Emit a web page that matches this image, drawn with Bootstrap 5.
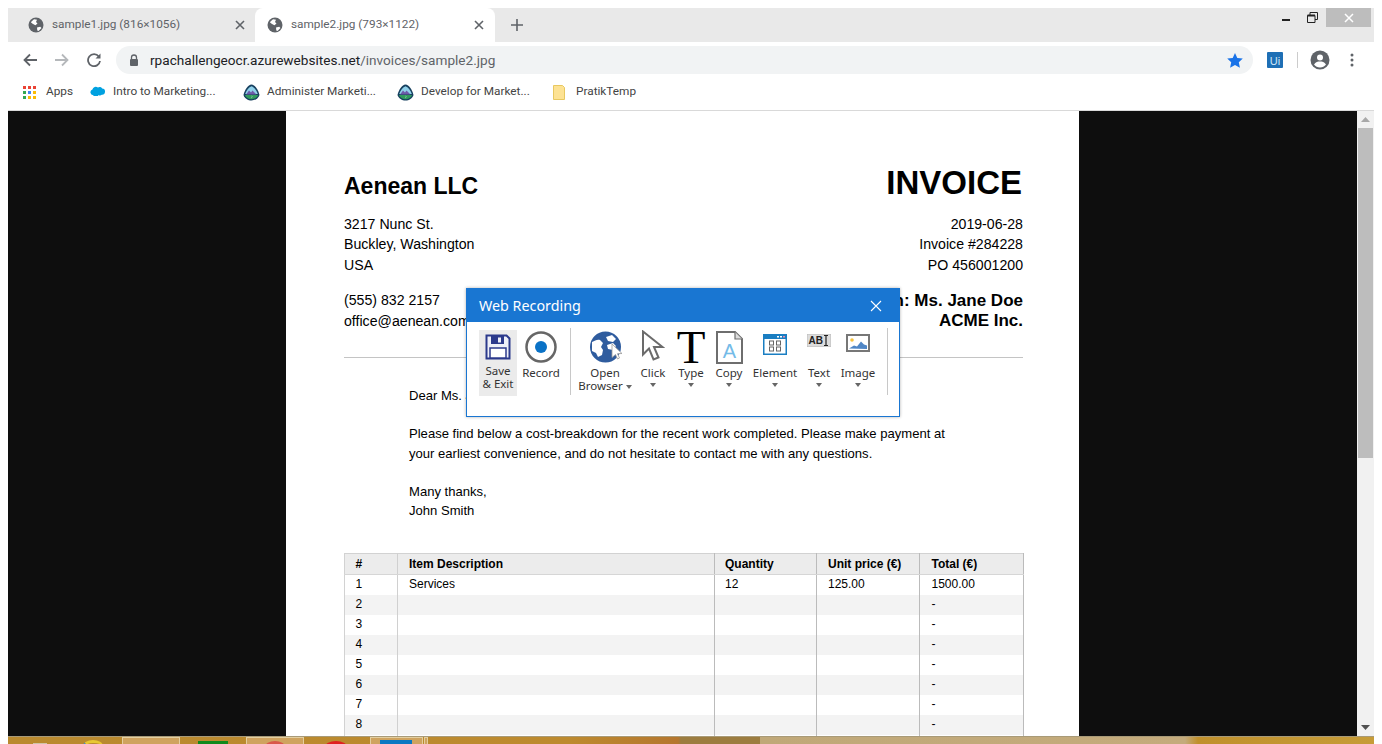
<!DOCTYPE html>
<html lang="en">
<head>
    <meta charset="UTF-8">
    <title>sample2.jpg (793×1122)</title>
    <link rel="stylesheet" href="https://cdn.jsdelivr.net/npm/bootstrap@5.3.0/dist/css/bootstrap.min.css">
    <style>
        html, body { height: 100%; overflow: hidden; background: #fff; }
        .browser-win { height: 736px; margin: 8px 8px 0; position: relative; font-family: Roboto, sans-serif; }
        .tabstrip { height: 34px; background: #e9e9e9; }
        .tab-item { height: 34px; font-size: 11.8px; color: #5f6368; }
        .first-tab { width: 247px; padding: 0 10px 0 20px; }
        .active-tab { width: 240px; padding: 0 11px 0 12px; background: #fff; border-radius: 8px 8px 0 0; }
        .tab-label { margin-left: 8px; flex: 1; white-space: nowrap; }
        .tab-plus { height: 34px; margin-left: 16px; }
        .winctl { margin-left: auto; margin-right: 3px; height: 19px; align-self: flex-start; }
        .win-min { width: 36px; height: 19px; }
        .win-max { width: 16px; height: 19px; margin-right: 6px; }
        .win-close { width: 45px; height: 19px; background: #bdbdbd; }
        .toolbar-row { height: 36px; background: #fff; }
        .nav-back { margin-left: 15px; }
        .nav-forward { margin-left: 18px; }
        .nav-reload { margin-left: 18px; }
        .addr-pill { width: 1137px; height: 28px; margin-left: 15px; padding: 0 10px 0 13px; background: #f1f3f4; border-radius: 14px; font-size: 13.6px; color: #5f6368; }
        .addr-pill b { font-weight: 400; color: #202124; }
        .addr-text { margin-left: 11px; }
        .ui-ext { margin-left: 14px; }
        .bar-sep { width: 1px; height: 16px; background: #ccc; margin-left: 14px; }
        .profile-ico { margin-left: 12px; }
        .more-ico { margin-left: 20px; }
        .bookmarks { height: 33px; padding: 0 0 4px 15px; border-bottom: 1px solid #d9d9d9; font-size: 11.8px; color: #444; }
        .bm-item { white-space: nowrap; }
        .bm-apps { width: 66px; }
        .bm-intro { width: 154px; }
        .bm-admin { width: 154px; }
        .bm-dev { width: 156px; }
        .bm-gap-6 { margin-left: 7px; }
        .bm-gap-8 { margin-left: 7px; }
        .bm-gap-11 { margin-left: 10px; }
        .bm-gap-12 { margin-left: 11px; }
        .cloud-ico { margin-top: -4px; }
        .view-area { height: 625px; background: #0e0e0e; overflow: hidden; }
        .sheet { width: 793px; margin-left: 278px; height: 625px; padding: 0 56px 0 58px; background: #fff; color: #000; font-family: "Liberation Sans", Arial, sans-serif; font-size: 14.15px; overflow: hidden; }
        .co-name { font-size: 23px; font-weight: 700; margin-top: 60px; line-height: 30px; }
        .inv-title { font-size: 33px; font-weight: 700; margin: 53px 1px 0 0; line-height: 38px; }
        .addr-block { line-height: 20.4px; margin-top: 13px; }
        .addr-right { margin-top: 12px; }
        .contact-block { line-height: 20.4px; margin-top: 15px; }
        .attn-block { font-size: 17px; font-weight: 700; line-height: 20px; margin-top: 16px; }
        .split-line { border-top: 1px solid #c4c4c4; margin: 26px 0 0; }
        .letter { margin: 28px 0 0 65px; font-size: 13.07px; line-height: 19.5px; }
        .letter p { margin: 0 0 18.5px; }
        table.inv-table { width: 679px; margin: 32.5px 0 0; font-size: 12px; table-layout: fixed; border: 1px solid #d2d2d2; border-collapse: collapse; }
        .inv-table th, .inv-table td { height: 20px; padding: 0 0 0 10px; line-height: 19px; border: 0; border-right: 1px solid #bbb; color: #000; background: #fff; box-shadow: none; }
        .inv-table th { height: 21px; background: #ececec; font-weight: 700; border-bottom: 1px solid #d6d6d6; }
        .inv-table th:first-child, .inv-table td:first-child { padding-left: 10.5px; border-right-color: #d0d0d0; }
        .inv-table th:nth-child(2), .inv-table td:nth-child(2) { padding-left: 11px; }
        .inv-table th:nth-child(4), .inv-table td:nth-child(4) { padding-left: 11px; }
        .inv-table th:nth-child(5), .inv-table td:nth-child(5) { padding-left: 11.5px; }
        .inv-table tbody tr:nth-child(even) td { background: #f3f3f3; }
        .vscroll { width: 17px; height: 625px; background: #f1f1f1; }
        .vs-thumb { height: 330px; width: 15px; margin: 0 auto; background: #bdbdbd; }
        .vs-btn { height: 17px; }
        .taskbar-strip { position: absolute; left: 8px; right: 8px; top: 736px; height: 8px; overflow: hidden; border-top: 1px solid #a89a78; background: linear-gradient(90deg, #b98a2f 0, #bd8a2e 560px, #b5762e 670px, #9c7c3f 673px, #9c7c3f 752px, #c0a878 752px, #c4ab7c 1177px, #c0902c 1190px, #c69c38 1366px); }
        .tb-btn { position: absolute; top: 0; height: 8px; width: 58px; background: #cfa35f; border: 1px solid #e4cfa0; }
        .tb-btn-short { width: 53px; }
        .tb-sliver { position: absolute; left: 416px; top: 0; width: 4px; height: 8px; background: #cfa35f; border: 1px solid #e4cfa0; }
        .tb-shape { position: absolute; }
        .tb-tan { left: 25px; top: 6px; width: 14px; height: 3px; background: #cfc4a8; }
        .tb-arc { left: 75px; top: 3px; width: 20px; height: 12px; border-top: 3px solid #e8c832; border-left: 2px solid #3f8fd0; border-radius: 50%; }
        .tb-green { left: 190px; top: 4px; width: 30px; height: 4px; background: #0f8a1c; }
        .tb-red1 { left: 257px; top: 4px; width: 20px; height: 12px; background: #d9574a; border-radius: 50%; }
        .tb-red2 { left: 317px; top: 4px; width: 22px; height: 12px; background: #e02020; border-radius: 50%; }
        .tb-blue { left: 372px; top: 3px; width: 32px; height: 5px; background: #0a78c2; }
        .rec-dialog { position: absolute; left: 458px; top: 280px; width: 434px; height: 129px; background: #fff; border: 1px solid #1976d2; box-shadow: 0 0 3px rgba(0,0,0,.3); font-family: "Noto Sans", sans-serif; }
        .rec-head { height: 33px; padding: 0 17px 0 12px; background: #1976d2; color: #fff; font-size: 14.3px; }
        .rec-tools { padding: 8px 0 0 12px; }
        .tool-item { flex: none; font-size: 11.5px; line-height: 13px; color: #333; text-align: center; }
        .tool-ico { height: 36px; }
        .tool-caret { display: block; width: 0; height: 0; margin: 4px auto 0; border: 3.5px solid transparent; border-top: 4px solid #666; border-bottom: 0; }
        .inline-caret { display: inline-block; width: 0; height: 0; vertical-align: middle; margin-left: 3px; border: 3.5px solid transparent; border-top: 4px solid #666; border-bottom: 0; }
        .tool-save { width: 38px; height: 66px; background: #ebebeb; }
        .save-ico { height: 32px; padding-top: 4px; }
        .save-label { margin-top: 2px; }
        .w-record { width: 48px; }
        .w-browser { width: 50px; }
        .w-click, .w-copy, .w-element { width: 46px; }
        .w-type { width: 30px; }
        .w-text { width: 42px; }
        .w-image { width: 36px; }
        .browser-label { margin: 0 -4px; white-space: nowrap; }
        .tool-sep { flex: none; width: 1px; height: 67px; margin-top: -2px; background: #c8c8c8; }
        .sep-first { margin: -2px 9px 0 5px; }
        .sep-last { margin-left: 11px; }
        .big-t { display: block; font-family: "Liberation Serif", serif; font-size: 47px; line-height: 34px; color: #000; }
        .ico-top1 { margin-top: 1px; }
        .ico-top4 { margin-top: 4px; }
    </style>
</head>
<body>
<div class="browser-win">
    <div class="tabstrip d-flex align-items-start">
        <div class="tab-item first-tab d-flex align-items-center">
            <svg width="16" height="16" viewBox="0 0 16 16"><circle cx="8" cy="8" r="7.500" fill="#5f6368"/><path d="M3.500 4.500 6 2.300l3 .4-1 2.300 1.500 1.500-2 1.700-2.500-1.200L3 5.500zM9 10.500l3.200-.8 1.300 1.300-3 3-1.200-.6z" fill="#fff"/></svg>
            <span class="tab-label">sample1.jpg (816×1056)</span>
            <svg width="10" height="10" viewBox="0 0 10 10"><path d="M1 1l8 8M9 1l-8 8" stroke="#5f6368" stroke-width="1.600"/></svg>
        </div>
        <div class="tab-item active-tab d-flex align-items-center">
            <svg width="16" height="16" viewBox="0 0 16 16"><circle cx="8" cy="8" r="7.500" fill="#5f6368"/><path d="M3.500 4.500 6 2.300l3 .4-1 2.300 1.500 1.500-2 1.700-2.500-1.200L3 5.500zM9 10.500l3.200-.8 1.300 1.300-3 3-1.200-.6z" fill="#fff"/></svg>
            <span class="tab-label">sample2.jpg (793×1122)</span>
            <svg width="10" height="10" viewBox="0 0 10 10"><path d="M1 1l8 8M9 1l-8 8" stroke="#5f6368" stroke-width="1.600"/></svg>
        </div>
        <div class="tab-plus d-flex align-items-center">
            <svg width="12" height="12" viewBox="0 0 12 12"><path d="M6 0v12M0 6h12" stroke="#5f6368" stroke-width="1.600"/></svg>
        </div>
        <div class="winctl d-flex">
            <div class="win-min d-flex align-items-center justify-content-center"><svg width="10" height="10" viewBox="0 0 10 10"><rect x="1" y="6" width="8" height="2" fill="#222"/></svg></div>
            <div class="win-max d-flex align-items-center justify-content-center"><svg width="11" height="11" viewBox="0 0 11 11"><path d="M.5 3.500h7.500v7H.5zM3 3.500V.5h7.500v7H8" fill="none" stroke="#222"/><path d="M.5 3.500h7.500" stroke="#222" stroke-width="2"/></svg></div>
            <div class="win-close d-flex align-items-center justify-content-center"><svg width="10" height="10" viewBox="0 0 10 10"><path d="M1 1l8 8M9 1l-8 8" stroke="#fff" stroke-width="1.500"/></svg></div>
        </div>
    </div>

    <div class="toolbar-row d-flex align-items-center">
        <svg class="nav-back" width="14" height="14" viewBox="0 0 14 14"><path d="M14 7H2M7 1.500 1.500 7 7 12.500" fill="none" stroke="#5f6368" stroke-width="1.800"/></svg>
        <svg class="nav-forward" width="14" height="14" viewBox="0 0 14 14"><path d="M0 7h12M7 1.500 12.500 7 7 12.500" fill="none" stroke="#b5b8bb" stroke-width="1.800"/></svg>
        <svg class="nav-reload" width="14" height="14" viewBox="0 0 14 14"><path d="M11.800 3.500A6 6 0 1 0 13 8" fill="none" stroke="#5f6368" stroke-width="1.800"/><path d="M13.500 0.500v5h-5z" fill="#5f6368"/></svg>
        <div class="addr-pill d-flex align-items-center">
            <svg width="10" height="12" viewBox="0 0 10 12"><path d="M2.500 5V3.500a2.500 2.500 0 0 1 5 0V5" fill="none" stroke="#5f6368" stroke-width="1.300"/><rect x="1" y="5" width="8" height="7" rx="1" fill="#5f6368"/></svg>
            <span class="addr-text flex-grow-1"><b>rpachallengeocr.azurewebsites.net</b>/invoices/sample2.jpg</span>
            <svg width="16" height="15" viewBox="0 0 16 15"><path d="M8 0l2.300 5 5.500.6-4 3.700 1.100 5.500L8 12l-4.900 2.800 1.100-5.500-4-3.700L5.700 5z" fill="#1a73e8"/></svg>
        </div>
        <svg class="ui-ext" width="16" height="16" viewBox="0 0 16 16"><rect width="16" height="16" rx="1" fill="#1e6fb5"/><text x="8" y="12.500" text-anchor="middle" font-family="Liberation Sans, sans-serif" font-size="11" fill="#cfe6f7">Ui</text></svg>
        <div class="bar-sep"></div>
        <svg class="profile-ico" width="20" height="20" viewBox="0 0 20 20"><circle cx="10" cy="10" r="9.500" fill="#5f6368"/><circle cx="10" cy="7.500" r="3" fill="#fff"/><path d="M4 14.500c1.500-2.500 3.800-3 6-3s4.500.5 6 3c-1.500 2-3.600 3-6 3s-4.500-1-6-3z" fill="#fff"/></svg>
        <svg class="more-ico" width="4" height="14" viewBox="0 0 4 14"><circle cx="2" cy="2" r="1.500" fill="#5f6368"/><circle cx="2" cy="7" r="1.500" fill="#5f6368"/><circle cx="2" cy="12" r="1.500" fill="#5f6368"/></svg>
    </div>

    <div class="bookmarks d-flex align-items-center">
        <div class="bm-item bm-apps d-flex align-items-center">
            <svg width="13" height="13" viewBox="0 0 13 13">
                <rect width="3" height="3" fill="#ea4335"/><rect x="5" width="3" height="3" fill="#ea4335"/><rect x="10" width="3" height="3" fill="#ea4335"/>
                <rect y="5" width="3" height="3" fill="#34a853"/><rect x="5" y="5" width="3" height="3" fill="#4285f4"/><rect x="10" y="5" width="3" height="3" fill="#fbbc05"/>
                <rect y="10" width="3" height="3" fill="#34a853"/><rect x="5" y="10" width="3" height="3" fill="#fbbc05"/><rect x="10" y="10" width="3" height="3" fill="#fbbc05"/>
            </svg>
            <span class="bm-gap-11">Apps</span>
        </div>
        <div class="bm-item bm-intro d-flex align-items-center">
            <svg class="cloud-ico" width="17" height="11" viewBox="0 0 18 13"><path d="M4 12a3.500 3.500 0 0 1-1-6.800A4 4 0 0 1 9.500 3a3.300 3.300 0 0 1 5 1.200A3.600 3.600 0 0 1 14 11.500a3 3 0 0 1-3.800.3 3.300 3.300 0 0 1-6.200.2z" fill="#00a1e0"/></svg>
            <span class="bm-gap-6">Intro to Marketing...</span>
        </div>
        <div class="bm-item bm-admin d-flex align-items-center">
            <svg width="17" height="17" viewBox="0 0 17 17"><path d="M8.500 0.500C12 1 15 5 16.500 11c-1 3.500-4.500 5.500-8 5.500S1.500 14.500.5 11C2 5 5 1 8.500 0.500z" fill="#17405f"/><path d="M8.500 2.200C11 3 13.500 6 14.800 10H2.200C3.500 6 6 3 8.500 2.200z" fill="#8fd0ea"/><path d="M3 10.500l3-4 2 2 1.500-2 4 4z" fill="#6d5aa8"/><path d="M1.800 11h13.400c-1 2.500-3.800 4.200-6.700 4.200S2.800 13.500 1.800 11z" fill="#2f9a5c"/><path d="M8 11l1 1.500-1 2 1.500-1.800z" fill="#fff"/></svg>
            <span class="bm-gap-8">Administer Marketi...</span>
        </div>
        <div class="bm-item bm-dev d-flex align-items-center">
            <svg width="17" height="17" viewBox="0 0 17 17"><path d="M8.500 0.500C12 1 15 5 16.500 11c-1 3.500-4.500 5.500-8 5.500S1.500 14.500.5 11C2 5 5 1 8.500 0.500z" fill="#17405f"/><path d="M8.500 2.200C11 3 13.500 6 14.800 10H2.200C3.500 6 6 3 8.500 2.200z" fill="#8fd0ea"/><path d="M3 10.500l3-4 2 2 1.500-2 4 4z" fill="#6d5aa8"/><path d="M1.800 11h13.400c-1 2.500-3.800 4.200-6.700 4.200S2.800 13.500 1.800 11z" fill="#2f9a5c"/><path d="M8 11l1 1.500-1 2 1.500-1.800z" fill="#fff"/></svg>
            <span class="bm-gap-8">Develop for Market...</span>
        </div>
        <div class="bm-item d-flex align-items-center">
            <svg width="12" height="15" viewBox="0 0 12 15"><path d="M.5.500h9l2 2v12H.5z" fill="#fde293" stroke="#e8c860"/></svg>
            <span class="bm-gap-12">PratikTemp</span>
        </div>
    </div>

    <div class="d-flex">
        <div class="view-area flex-grow-1">
            <div class="sheet">
                <div class="d-flex justify-content-between">
                    <div>
                        <div class="co-name">Aenean LLC</div>
                        <div class="addr-block">3217 Nunc St.<br>Buckley, Washington<br>USA</div>
                        <div class="contact-block">(555) 832 2157<br>office@aenean.com</div>
                    </div>
                    <div class="text-end">
                        <div class="inv-title">INVOICE</div>
                        <div class="addr-block addr-right">2019-06-28<br>Invoice #284228<br>PO 456001200</div>
                        <div class="attn-block">Attn: Ms. Jane Doe<br>ACME Inc.</div>
                    </div>
                </div>
                <div class="split-line"></div>
                <div class="letter">
                    <p>Dear Ms. Jane Doe,</p>
                    <p>Please find below a cost-breakdown for the recent work completed. Please make payment at<br>your earliest convenience, and do not hesitate to contact me with any questions.</p>
                    <p>Many thanks,<br>John Smith</p>
                </div>
                <table class="table inv-table">
                    <colgroup><col style="width:53px"><col style="width:317px"><col style="width:102px"><col style="width:103px"><col style="width:104px"></colgroup>
                    <thead>
                        <tr><th>#</th><th>Item Description</th><th>Quantity</th><th>Unit price (€)</th><th>Total (€)</th></tr>
                    </thead>
                    <tbody>
                        <tr><td>1</td><td>Services</td><td>12</td><td>125.00</td><td>1500.00</td></tr>
                        <tr><td>2</td><td></td><td></td><td></td><td>-</td></tr>
                        <tr><td>3</td><td></td><td></td><td></td><td>-</td></tr>
                        <tr><td>4</td><td></td><td></td><td></td><td>-</td></tr>
                        <tr><td>5</td><td></td><td></td><td></td><td>-</td></tr>
                        <tr><td>6</td><td></td><td></td><td></td><td>-</td></tr>
                        <tr><td>7</td><td></td><td></td><td></td><td>-</td></tr>
                        <tr><td>8</td><td></td><td></td><td></td><td>-</td></tr>
                        <tr><td>&nbsp;</td><td></td><td></td><td></td><td></td></tr>
                    </tbody>
                </table>
            </div>
        </div>
        <div class="vscroll d-flex flex-column">
            <div class="vs-btn d-flex align-items-center justify-content-center"><svg width="9" height="5" viewBox="0 0 9 5"><path d="M4.500 0l4.500 5H0z" fill="#a8a8a8"/></svg></div>
            <div class="vs-thumb"></div>
            <div class="vs-btn d-flex align-items-center justify-content-center mt-auto"><svg width="9" height="5" viewBox="0 0 9 5"><path d="M0 0h9L4.500 5z" fill="#505050"/></svg></div>
        </div>
    </div>

    <div class="rec-dialog">
        <div class="rec-head d-flex align-items-center justify-content-between">
            <span>Web Recording</span>
            <svg width="12" height="12" viewBox="0 0 12 12"><path d="M1 1l10 10M11 1L1 11" stroke="#fff" stroke-width="1.100"/></svg>
        </div>
        <div class="rec-tools d-flex align-items-start">
            <div class="tool-item tool-save">
                <div class="save-ico">
                    <svg width="26" height="26" viewBox="0 0 26 26"><path d="M1.500 1.500h20l3 3v20h-23z" fill="#eef0f8" stroke="#2c3a8c" stroke-width="2"/><rect x="6" y="2" width="13" height="8" fill="#2c3a8c"/><rect x="13" y="3.500" width="3" height="5" fill="#eef0f8"/><rect x="5" y="14" width="16" height="10" fill="#fff" stroke="#2c3a8c" stroke-width="1.500"/></svg>
                </div>
                <div class="save-label">Save<br>&amp; Exit</div>
            </div>
            <div class="tool-item w-record">
                <div class="tool-ico">
                    <svg class="ico-top1" width="32" height="32" viewBox="0 0 32 32"><circle cx="16" cy="16" r="14.500" fill="#fff" stroke="#666" stroke-width="2.500"/><circle cx="16" cy="16" r="6" fill="#0a72c6"/></svg>
                </div>
                <div>Record</div>
            </div>
            <div class="tool-sep sep-first"></div>
            <div class="tool-item w-browser">
                <div class="tool-ico">
                    <svg width="36" height="34" viewBox="0 0 36 34">
                        <circle cx="18.500" cy="17" r="15.500" fill="#2f5c9e"/>
                        <path d="M5 12c3-1 5-3 8-2l3 3-2 4 2 3-1 5-4 2-2-4-4-2zM19 7l6-2 4 4-3 3-5-1zM20 15l6-2 3 3-3 4-5-1z" fill="#fff"/>
                        <path d="M25 14l10 9.500-4.500.2 2 4.300-2 1-2-4.500-3.500 3z" fill="#fff" stroke="#999" stroke-width=".8"/>
                    </svg>
                </div>
                <div class="browser-label">Open<br>Browser<span class="inline-caret"></span></div>
            </div>
            <div class="tool-item w-click">
                <div class="tool-ico">
                    <svg width="24" height="32" viewBox="0 0 24 32"><path d="M2 1.500v23l6-6 4.500 11 5-2-4.500-10.500h8.500z" fill="#fff" stroke="#6b6b6b" stroke-width="2"/></svg>
                </div>
                <div>Click</div><span class="tool-caret"></span>
            </div>
            <div class="tool-item w-type">
                <div class="tool-ico"><span class="big-t">T</span></div>
                <div>Type</div><span class="tool-caret"></span>
            </div>
            <div class="tool-item w-copy">
                <div class="tool-ico">
                    <svg class="ico-top1" width="27" height="33" viewBox="0 0 27 33"><path d="M1 1h18l7 7v24H1z" fill="#fff" stroke="#6e6e6e" stroke-width="2"/><path d="M19 1v7h7" fill="#ddd" stroke="#6e6e6e" stroke-width="1.200"/><text x="13.500" y="27" text-anchor="middle" font-family="Liberation Sans, sans-serif" font-size="20" fill="#74bbe8">A</text></svg>
                </div>
                <div>Copy</div><span class="tool-caret"></span>
            </div>
            <div class="tool-item w-element">
                <div class="tool-ico">
                    <svg class="ico-top4" width="24" height="21" viewBox="0 0 24 21"><rect width="24" height="21" fill="#1a7ec2"/><rect x="1.500" y="5" width="21" height="14.500" fill="#fff"/><g fill="#fff" stroke="#666"><rect x="6.500" y="7" width="4" height="4"/><rect x="13.500" y="7" width="4" height="4"/><rect x="6.500" y="13" width="4" height="4"/><rect x="13.500" y="13" width="4" height="4"/></g><rect x="14" y="2" width="2" height="1.500" fill="#fff"/><rect x="17" y="2" width="2" height="1.500" fill="#fff"/><rect x="20" y="2" width="2" height="1.500" fill="#e8a"/></svg>
                </div>
                <div>Element</div><span class="tool-caret"></span>
            </div>
            <div class="tool-item w-text">
                <div class="tool-ico">
                    <svg class="ico-top4" width="24" height="13" viewBox="0 0 24 13"><rect width="24" height="13" fill="#dcdcdc" stroke="#bbb"/><text x="1.500" y="10" font-family="Liberation Sans, sans-serif" font-weight="700" font-size="10" fill="#222">AB</text><path d="M17 1.500h4M19 1.500v10M17 11.500h4" stroke="#222" stroke-width="1.200" fill="none"/></svg>
                </div>
                <div>Text</div><span class="tool-caret"></span>
            </div>
            <div class="tool-item w-image">
                <div class="tool-ico">
                    <svg class="ico-top4" width="24" height="18" viewBox="0 0 24 18"><rect x="1" y="1" width="22" height="16" fill="#fff" stroke="#777" stroke-width="2"/><circle cx="6" cy="6" r="1.800" fill="#f5c242"/><path d="M3 14.500l5-3 3 1 4-5 3 3 3 1v3.500z" fill="#4f86c6"/></svg>
                </div>
                <div>Image</div><span class="tool-caret"></span>
            </div>
            <div class="tool-sep sep-last"></div>
        </div>
    </div>
</div>
<div class="taskbar-strip">
    <div class="tb-shape tb-tan"></div>
    <div class="tb-shape tb-arc"></div>
    <div class="tb-btn" style="left:114px"></div>
    <div class="tb-shape tb-green"></div>
    <div class="tb-btn" style="left:238px"></div>
    <div class="tb-shape tb-red1"></div>
    <div class="tb-shape tb-red2"></div>
    <div class="tb-btn tb-btn-short" style="left:362px"></div>
    <div class="tb-shape tb-blue"></div>
    <div class="tb-sliver"></div>
</div>
</body>
</html>
